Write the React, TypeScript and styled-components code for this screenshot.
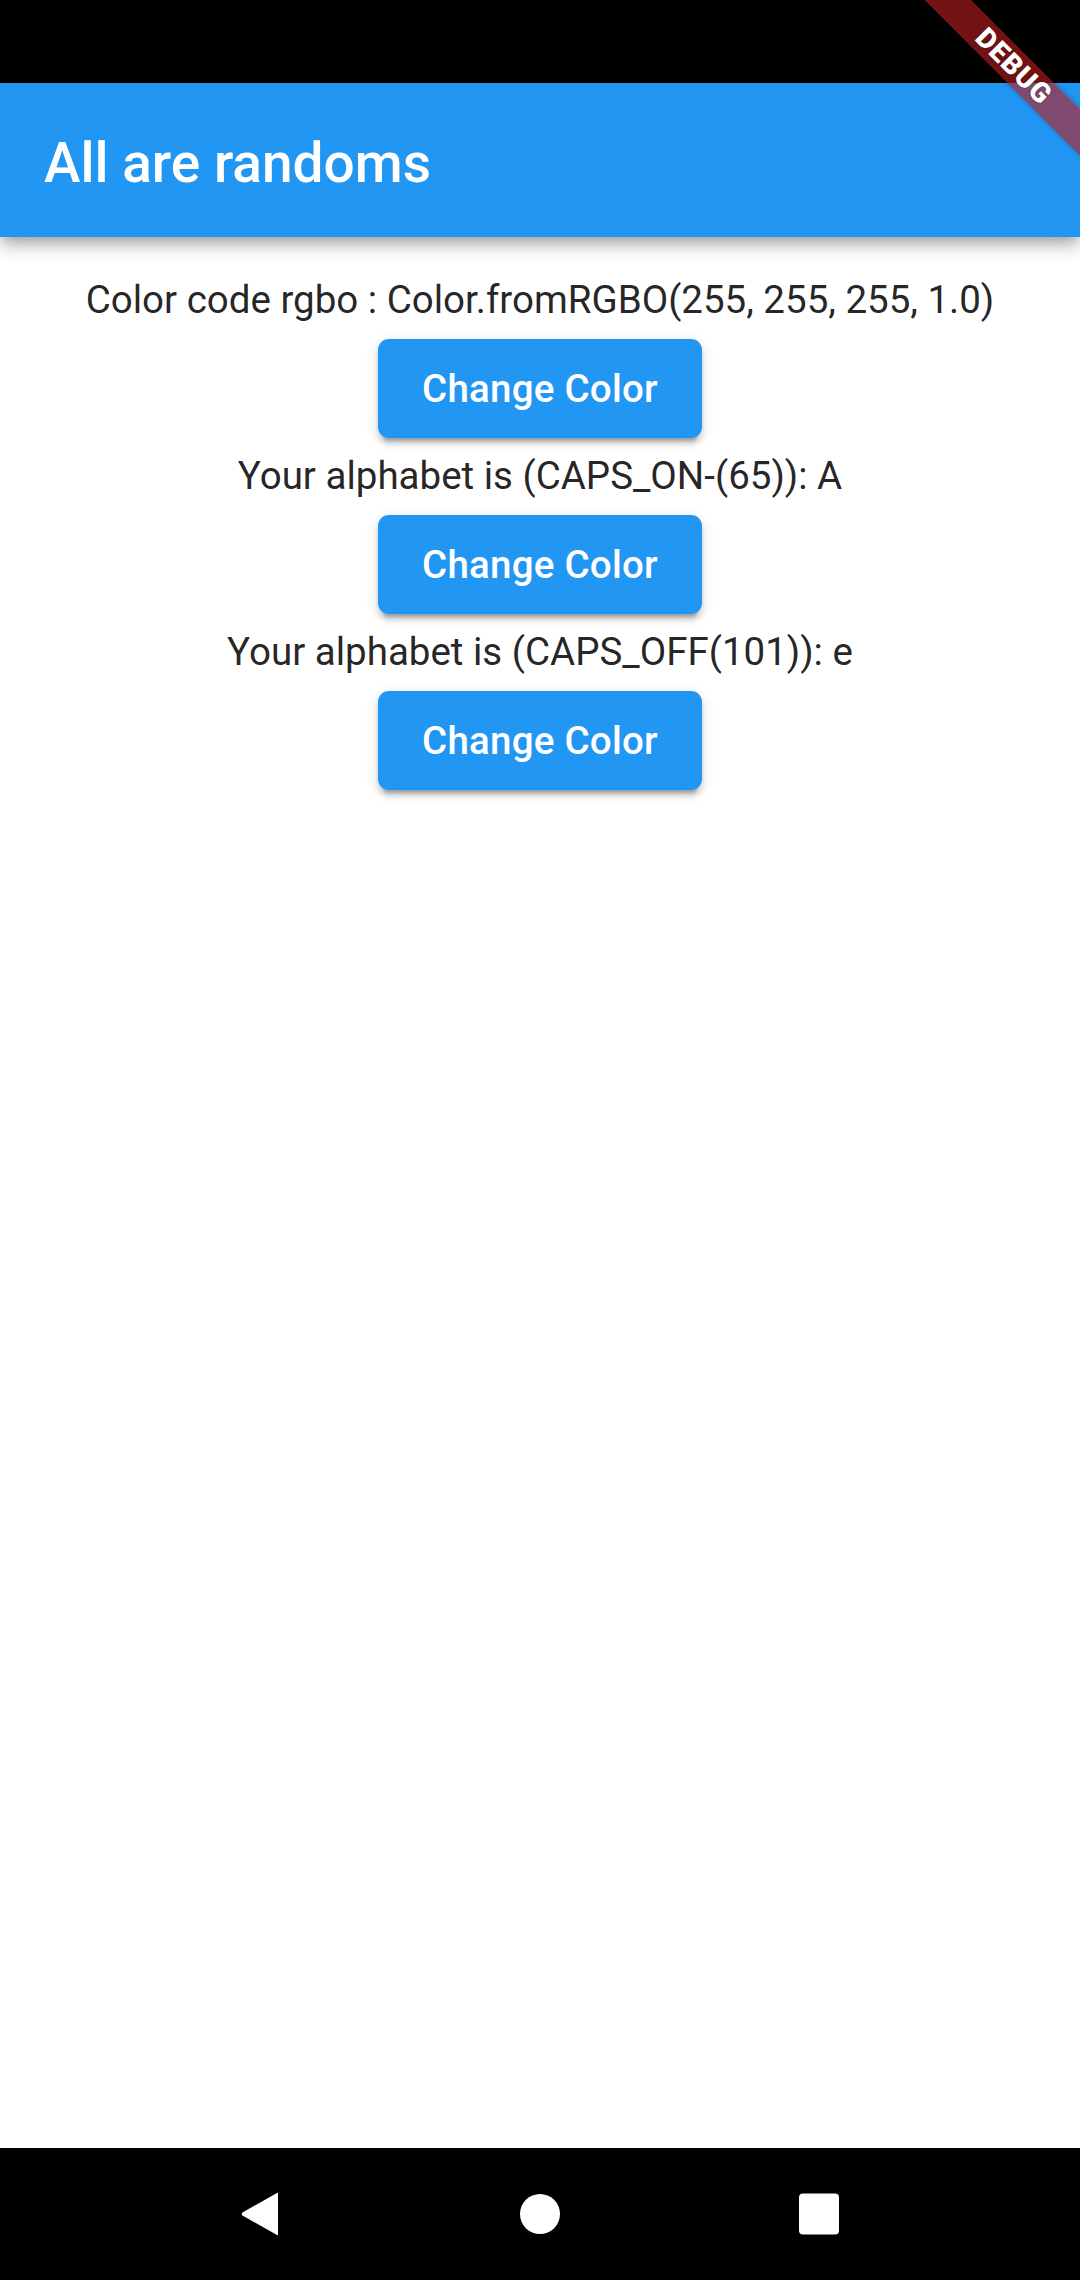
import React from "react";
import styled, { createGlobalStyle } from "styled-components";

const GlobalStyle = createGlobalStyle`
  html, body {
    margin: 0;
    padding: 0;
    background: #ffffff;
  }
  body {
    font-family: Roboto, "Noto Sans", "Liberation Sans", sans-serif;
  }
  * { box-sizing: border-box; }
`;

const Screen = styled.div`
  position: relative;
  width: 1080px;
  height: 2280px;
  display: flex;
  flex-direction: column;
  overflow: hidden;
  background: #ffffff;
`;

const StatusBar = styled.div`
  height: 83px;
  flex: none;
  background: #000000;
`;

const AppBar = styled.header`
  position: relative;
  z-index: 2;
  height: 154px;
  flex: none;
  display: flex;
  align-items: center;
  padding: 6px 44px 0;
  background: #2196f3;
  box-shadow: 0 5.5px 11px -2.75px rgba(0, 0, 0, 0.2),
    0 11px 14px 0 rgba(0, 0, 0, 0.14), 0 2.75px 27.5px 0 rgba(0, 0, 0, 0.12);
`;

const Title = styled.h1`
  margin: 0;
  font-family: Roboto, sans-serif;
  font-size: 55px;
  font-weight: 500;
  color: #ffffff;
  letter-spacing: 0;
`;

const Content = styled.main`
  flex: 1;
  display: flex;
  flex-direction: column;
  align-items: center;
  padding-top: 41px;
`;

const Label = styled.p`
  margin: 0;
  font-family: Roboto, sans-serif;
  font-size: 38.5px;
  line-height: 44px;
  height: 44px;
  color: rgba(0, 0, 0, 0.87);
  white-space: nowrap;
`;

const ButtonSlot = styled.div`
  padding: 16.5px 0;
  display: flex;
  justify-content: center;
`;

const RaisedButton = styled.button`
  height: 99px;
  padding: 0 44px;
  border: none;
  border-radius: 11px;
  background: #2196f3;
  color: #ffffff;
  font-family: Roboto, sans-serif;
  font-size: 38.5px;
  font-weight: 500;
  letter-spacing: 0.25px;
  cursor: pointer;
  box-shadow: 0 8px 3px -5.5px rgba(0, 0, 0, 0.2),
    0 5.5px 5.5px 0 rgba(0, 0, 0, 0.14), 0 3px 14px 0 rgba(0, 0, 0, 0.12);
`;

const NavBar = styled.nav`
  height: 132px;
  flex: none;
  background: #000000;
  display: flex;
  align-items: center;
  justify-content: center;
  gap: 239px;
`;

const NavIcon = styled.svg`
  display: block;
  width: 40px;
  height: 46px;
`;

const BannerPivot = styled.div`
  position: absolute;
  top: 0;
  right: 0;
  width: 0;
  height: 0;
  z-index: 10;
  transform: rotate(45deg);
  transform-origin: 0 0;
  pointer-events: none;
`;

const Banner = styled.div`
  position: absolute;
  left: -110px;
  top: 77px;
  width: 220px;
  height: 33px;
  display: flex;
  align-items: center;
  justify-content: center;
  background: rgba(183, 28, 28, 0.627);
  box-shadow: 0 0 6px rgba(0, 0, 0, 0.25);
  font-family: Roboto, "DejaVu Sans", sans-serif;
  font-size: 28px;
  font-weight: 900;
  letter-spacing: 1px;
  color: #ffffff;
  line-height: 1;
  text-shadow: 0 0 2px rgba(0, 0, 0, 0.4);
`;

const rows = [
  "Color code rgbo : Color.fromRGBO(255, 255, 255, 1.0)",
  "Your alphabet is (CAPS_ON-(65)): A",
  "Your alphabet is (CAPS_OFF(101)): e",
];

export default function App() {
  return (
    <>
      <GlobalStyle />
      <Screen>
        <StatusBar />
        <AppBar>
          <Title>All are randoms</Title>
        </AppBar>
        <Content>
          {rows.map((text) => (
            <React.Fragment key={text}>
              <Label>{text}</Label>
              <ButtonSlot>
                <RaisedButton type="button">Change Color</RaisedButton>
              </ButtonSlot>
            </React.Fragment>
          ))}
        </Content>
        <NavBar>
          <NavIcon viewBox="0 0 40 46">
            <path
              d="M36 2 Q37 1 37 3 L37 43 Q37 45 36 44 L1.5 24.5 Q0 23 1.5 21.5 Z"
              fill="#ffffff"
            />
          </NavIcon>
          <NavIcon viewBox="0 0 40 46">
            <circle cx="20" cy="23" r="20" fill="#ffffff" />
          </NavIcon>
          <NavIcon viewBox="0 0 40 46">
            <rect x="0" y="2.5" width="40" height="41" rx="4" fill="#ffffff" />
          </NavIcon>
        </NavBar>
        <BannerPivot>
          <Banner>DEBUG</Banner>
        </BannerPivot>
      </Screen>
    </>
  );
}
